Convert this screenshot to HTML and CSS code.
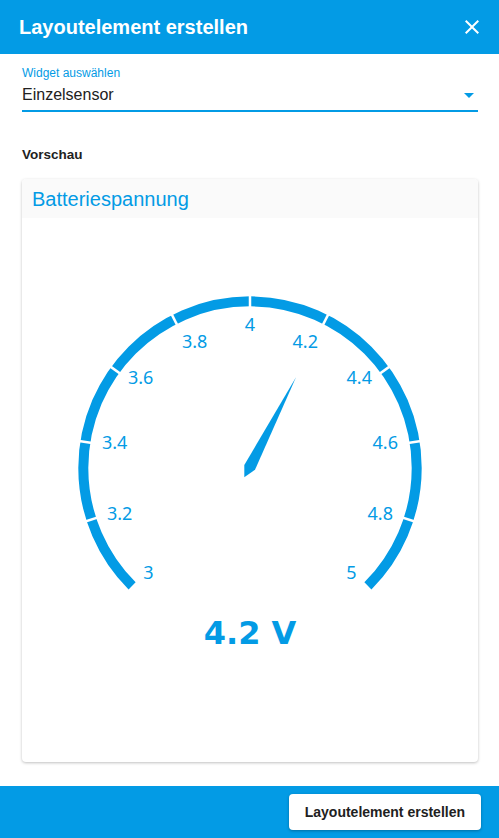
FILE: index.html
```html
<!DOCTYPE html>
<html lang="de">

<head>
    <meta charset="UTF-8">
    <meta name="viewport" content="width=device-width, initial-scale=1.0">
    <title>Layoutelement erstellen</title>
    <link rel="stylesheet" href="styles.css">
</head>

<body>
    <div class="dialog">
        <header class="dialog-header">
            <span class="dialog-title">Layoutelement erstellen</span>
            <svg class="close-icon" viewBox="0 0 24 24" width="24" height="24">
                <path d="M19 6.41L17.59 5 12 10.59 6.41 5 5 6.41 10.59 12 5 17.59 6.41 19 12 13.41 17.59 19 19 17.59 13.41 12z" fill="#fff" />
            </svg>
        </header>

        <div class="dialog-content">
            <div class="select-field">
                <label class="select-label">Widget auswählen</label>
                <div class="select-value">
                    <span>Einzelsensor</span>
                    <span class="select-arrow"></span>
                </div>
            </div>

            <div class="section-title">Vorschau</div>

            <div class="card">
                <div class="card-header">Batteriespannung</div>
                <div class="card-body">
                    <svg class="gauge" viewBox="0 0 456 544" width="456" height="544">
                        <path class="gauge-arc" d="M 110.1 367.9 A 166.7 166.7 0 1 1 345.9 367.9" />
                        <!-- white split marks at every 0.2 V (27deg apart) -->
                        <g class="gauge-splits">
                            <line x1="228" y1="72" x2="228" y2="100" transform="rotate(-108 228 250)" />
                            <line x1="228" y1="72" x2="228" y2="100" transform="rotate(-81 228 250)" />
                            <line x1="228" y1="72" x2="228" y2="100" transform="rotate(-54 228 250)" />
                            <line x1="228" y1="72" x2="228" y2="100" transform="rotate(-27 228 250)" />
                            <line x1="228" y1="72" x2="228" y2="100" />
                            <line x1="228" y1="72" x2="228" y2="100" transform="rotate(27 228 250)" />
                            <line x1="228" y1="72" x2="228" y2="100" transform="rotate(54 228 250)" />
                            <line x1="228" y1="72" x2="228" y2="100" transform="rotate(81 228 250)" />
                            <line x1="228" y1="72" x2="228" y2="100" transform="rotate(108 228 250)" />
                        </g>
                        <g class="gauge-labels">
                            <text x="126.5" y="361">3</text>
                            <text x="97.7" y="302">3.2</text>
                            <text x="92.7" y="231">3.4</text>
                            <text x="118.7" y="166">3.6</text>
                            <text x="172.7" y="129.5">3.8</text>
                            <text x="228" y="113">4</text>
                            <text x="283.3" y="129.5">4.2</text>
                            <text x="337.3" y="166">4.4</text>
                            <text x="363.3" y="231">4.6</text>
                            <text x="358.3" y="302">4.8</text>
                            <text x="329.5" y="361">5</text>
                        </g>
                        <polygon class="gauge-needle" points="274,159.3 233,251.7 222.3,259.3 222.3,247" />
                        <text class="gauge-value" x="228" y="426">4.2 V</text>
                    </svg>
                </div>
            </div>
        </div>

        <footer class="dialog-footer">
            <button type="button" class="create-button">Layoutelement erstellen</button>
        </footer>
    </div>
</body>

</html>
```

FILE: styles.css
```css
* {
    margin: 0;
    padding: 0;
    box-sizing: border-box;
}

body {
    font-family: 'Liberation Sans', Arial, sans-serif;
    background-color: #fff;
    color: #212121;
}

.dialog {
    width: 499px;
    height: 838px;
    display: flex;
    flex-direction: column;
    overflow: hidden;
}

.dialog-header {
    height: 55px;
    background-color: #039be5;
    display: flex;
    align-items: center;
    justify-content: space-between;
    padding: 0 15px 0 19px;
}

.dialog-title {
    font-size: 20px;
    font-weight: bold;
    color: #fff;
    padding-top: 1px;
}

.close-icon {
    display: block;
}

.dialog-content {
    flex: 1;
    padding: 0 21px 0 22px;
}

.select-field {
    margin-top: 12px;
    border-bottom: 2px solid #039be5;
    padding-bottom: 5px;
}

.select-label {
    display: block;
    font-size: 12px;
    line-height: 14px;
    color: #039be5;
    margin-bottom: 5px;
}

.select-value {
    display: flex;
    align-items: center;
    justify-content: space-between;
    font-size: 16px;
    line-height: 20px;
    color: #212121;
}

.select-arrow {
    width: 0;
    height: 0;
    border-left: 5px solid transparent;
    border-right: 5px solid transparent;
    border-top: 5px solid #039be5;
    margin-right: 4px;
}

.section-title {
    margin-top: 35px;
    font-size: 13.5px;
    line-height: 16px;
    font-weight: bold;
    color: #212121;
}

.card {
    margin-top: 16px;
    border-radius: 4px;
    background-color: #fff;
    box-shadow: 0 1px 3px rgba(0, 0, 0, 0.25);
    overflow: hidden;
}

.card-header {
    height: 39px;
    padding: 1px 10px 0;
    line-height: 38px;
    font-size: 20px;
    color: #039be5;
    background-color: #fafafa;
}

.card-body {
    height: 544px;
}

.gauge {
    display: block;
}

.gauge-arc {
    fill: none;
    stroke: #039be5;
    stroke-width: 10;
}

.gauge-splits line {
    stroke: #fff;
    stroke-width: 2.5;
}

.gauge-labels text {
    font-family: 'Noto Sans', sans-serif;
    font-size: 18px;
    fill: #039be5;
    text-anchor: middle;
}

.gauge-needle {
    fill: #039be5;
}

.gauge-value {
    font-family: 'DejaVu Sans', sans-serif;
    font-size: 32px;
    font-weight: bold;
    fill: #039be5;
    text-anchor: middle;
}

.dialog-footer {
    height: 52px;
    margin-top: 24px;
    background-color: #039be5;
    display: flex;
    justify-content: flex-end;
    align-items: flex-start;
    padding: 8px 18px 0 0;
}

.create-button {
    height: 36px;
    padding: 0 16px;
    border: none;
    border-radius: 4px;
    background-color: #fff;
    color: #212121;
    font-family: 'Liberation Sans', Arial, sans-serif;
    font-size: 14px;
    font-weight: bold;
    box-shadow: 0 1px 3px rgba(0, 0, 0, 0.3);
    cursor: pointer;
}
```
